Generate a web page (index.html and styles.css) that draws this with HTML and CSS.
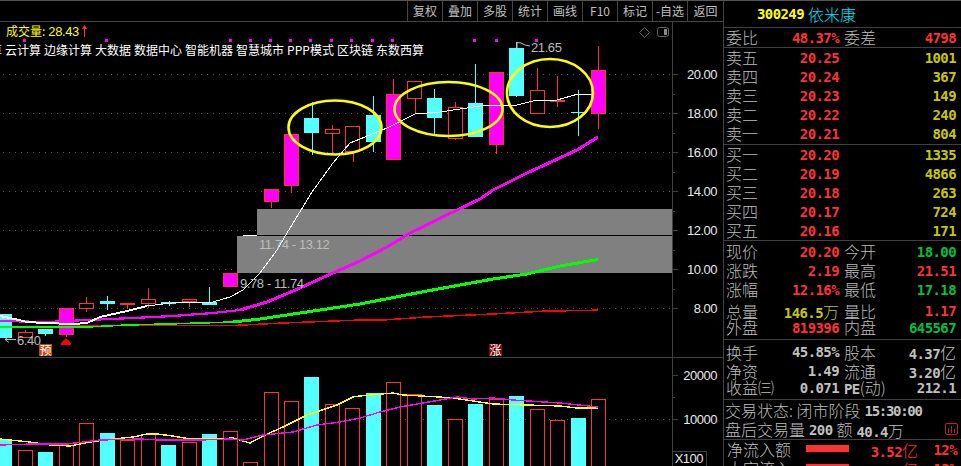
FILE: index.html
```html
<!DOCTYPE html>
<html>
  <head>
    <meta charset="UTF-8">
    <title>300249 依米康</title>
    <link rel="stylesheet" href="styles.css">
  </head>
  <body>
    <div class="app">
      <div class="main">
        <div class="toolbar">
          <a>复权</a><a>叠加</a><a>多股</a><a>统计</a><a>画线</a><a>F10</a><a>标记</a><a>-自选</a><a>返回</a>
        </div>
        <div class="chart">
          <svg class="plot" width="723" height="444" viewBox="0 22 723 444">
            <!-- grid -->
            <path class="grid" d="M3 74.5H672M3 113.5H672M3 152.5H672M3 191.5H672M3 230.5H672M3 269.5H672M3 308.5H672M3 419.5H672"/>
            <!-- gaps -->
            <rect class="gap" x="257" y="209" width="415" height="26"/>
            <rect class="gap" x="237" y="236" width="435" height="37"/>
            <path class="gap-line" d="M257 235.5H672"/>
            <path class="doji-white" d="M243 235.5H257"/>
            <!-- axis -->
            <path class="axis" d="M672.5 22V466M0 357.5H723M673 451.5H706.5V466"/>
            <path class="axis" d="M672 74.5H678M672 113.5H678M672 152.5H678M672 191.5H678M672 230.5H678M672 269.5H678M672 308.5H678M672 94.5H675M672 133.5H675M672 172.5H675M672 211.5H675M672 250.5H675M672 289.5H675M672 375.5H678M672 397.5H675M672 419.5H678"/>
            <text class="tick" x="717" y="79">20.00</text>
            <text class="tick" x="717" y="118">18.00</text>
            <text class="tick" x="717" y="157">16.00</text>
            <text class="tick" x="717" y="196">14.00</text>
            <text class="tick" x="717" y="235">12.00</text>
            <text class="tick" x="717" y="274">10.00</text>
            <text class="tick" x="717" y="313">8.00</text>
            <text class="tick" x="717" y="380">20000</text>
            <text class="tick" x="717" y="424">10000</text>
            <text class="tick" x="703" y="463">X100</text>

            <!-- candles -->
            <path class="wick-up" d="M25.5 330V332M86.5 297V303M86.5 309V312M127.5 305V309M148.5 288V299M148.5 304V308M189.5 302V307M66.5 335V337M271.5 202V208M291.5 186V193M332.5 125V129M332.5 134V153M353.5 152V162M393.5 79V94M415.5 99V113M455.5 102V107M455.5 139V140M496.5 145V154M537.5 68V90M557.5 76V100M557.5 102V107M598.5 46V70M598.5 114V129"/>
            <path class="wick-down" d="M45.5 334V336M107.5 296V310M169.5 301V306M209.5 287V302M312.5 102V155M373.5 96V152M434.5 89V135M475.5 64V137M516.5 42V97M578.5 90V136M571 112.5H586"/>
            <rect class="down" x="0" y="314" width="12" height="24"/>
            <rect class="up" x="18.5" y="332.5" width="14" height="5"/>
            <rect class="down" x="38" y="329" width="15" height="5"/>
            <rect class="limit" x="59.5" y="308.5" width="14" height="26"/>
            <rect class="up" x="79.5" y="303.5" width="14" height="5"/>
            <rect class="down" x="100" y="301" width="15" height="3"/>
            <rect class="flat" x="120" y="303" width="15" height="2"/>
            <rect class="up" x="141.5" y="299.5" width="14" height="4"/>
            <rect class="down" x="161" y="302" width="15" height="2"/>
            <rect class="up" x="182.5" y="299.5" width="14" height="2"/>
            <rect class="down" x="202" y="302" width="15" height="3"/>
            <rect class="limit" x="223.5" y="273.5" width="14" height="13"/>
            <rect class="limit" x="264.5" y="189.5" width="14" height="12"/>
            <rect class="limit" x="284.5" y="134.5" width="14" height="51"/>
            <rect class="down" x="304" y="118" width="15" height="15"/>
            <rect class="up" x="325.5" y="129.5" width="14" height="4"/>
            <rect class="up" x="345.5" y="126.5" width="14" height="25"/>
            <rect class="down" x="366" y="115" width="15" height="27"/>
            <rect class="limit" x="386.5" y="94.5" width="14" height="65"/>
            <rect class="up" x="407.5" y="81.5" width="14" height="17"/>
            <rect class="down" x="427" y="98" width="15" height="20"/>
            <rect class="up" x="448.5" y="107.5" width="14" height="31"/>
            <rect class="down" x="468" y="103" width="15" height="34"/>
            <rect class="limit" x="489.5" y="72.5" width="14" height="72"/>
            <rect class="down" x="509" y="48" width="15" height="48"/>
            <rect class="up" x="530.5" y="90.5" width="14" height="23"/>
            <rect class="flat" x="550" y="100" width="15" height="2"/>
            <rect class="limit" x="591.5" y="70.5" width="14" height="43"/>

            <!-- moving averages -->
            <polyline class="ma-red" points="0,327 117,325.5 233,325.5 283,323 360,320 383,320 427,317 493,314 547,311 587,310.5 598,310"/>
            <polyline class="ma-green thin" points="0,327 87,327 127,325 167,324 233,322"/>
            <polyline class="ma-green" points="233,322 260,319 300,313 360,304 427,291 493,279 527,274 560,266 598,259.5"/>
            <polyline class="ma-pink thin" points="0,321 47,322 87,320 133,318 173,316 213,313 240,310"/>
            <polyline class="ma-pink" points="240,310 267,302 300,288 333,273 360,261 387,247 410,233 457,210 480,199 493,190 527,173 577,150 598,137"/>
            <polyline class="ma-white wide" points="0,316 10,318 27,322 45,323 73,324 87,323 100,317 127,311 147,306"/>
            <polyline class="ma-white" points="147,306 180,302 213,302 230,297 243,290 260,273 277,250 287,233 312,192 333,163 350,143 360,139 387,128 415,114 440,112 480,106 490,105 513,106 537,100 557,100 578,94 593,94"/>

            <!-- marks -->
            <path class="flags" d="M22.500 38.500h3v3h-3zM104.500 38.500h3v3h-3zM228.500 38.500h3v3h-3zM248.500 38.500h3v3h-3zM268.500 38.500h3v3h-3zM288.500 38.500h3v3h-3zM308.500 38.500h3v3h-3zM329.500 38.500h3v3h-3zM349.500 38.500h3v3h-3zM370.500 38.500h3v3h-3zM390.500 38.500h3v3h-3zM472.500 38.500h3v3h-3zM494.500 38.500h3v3h-3zM534.500 38.500h3v3h-3z"/>
            <path class="arrow" d="M66 338L71 343V345H61V343Z"/>
            <ellipse class="ring" cx="335" cy="127.500" rx="46.500" ry="27"/>
            <ellipse class="ring" cx="448.500" cy="109" rx="54" ry="27"/>
            <ellipse class="ring" cx="550" cy="93" rx="43" ry="34"/>

            <!-- price notes -->
            <text class="note" x="259" y="249">11.74 - 13.12</text>
            <text class="note" x="240" y="288">9.78 - 11.74</text>
            <text class="note" x="17" y="345">6.40</text>
            <text class="note" x="531" y="52">21.65</text>
            <path class="leader" d="M16 339.500H5M9 336.500L5 339.500L9 342.500"/>
            <path class="leader" d="M517 48V42.500L521 43L525 45L530 46"/>

            <!-- volume -->
            <rect class="down" x="0" y="440" width="12" height="26"/>
            <rect class="up" x="18.500" y="450.500" width="14" height="16"/>
            <rect class="down" x="38" y="452" width="15" height="14"/>
            <rect class="up" x="59.500" y="445.500" width="14" height="21"/>
            <rect class="up" x="79.500" y="423.500" width="14" height="43"/>
            <rect class="down" x="100" y="433" width="15" height="33"/>
            <rect class="up" x="120.500" y="440.500" width="14" height="26"/>
            <rect class="up" x="141.500" y="434.500" width="14" height="32"/>
            <rect class="down" x="161" y="445" width="15" height="21"/>
            <rect class="up" x="182.500" y="442.500" width="14" height="24"/>
            <rect class="down" x="202" y="434" width="15" height="32"/>
            <rect class="up" x="223.500" y="431.500" width="14" height="35"/>
            <rect class="up" x="243.500" y="462.500" width="14" height="4"/>
            <rect class="up" x="264.500" y="392.500" width="14" height="74"/>
            <rect class="up" x="284.500" y="401.500" width="14" height="65"/>
            <rect class="down" x="304" y="377" width="15" height="89"/>
            <rect class="up" x="325.500" y="404.500" width="14" height="62"/>
            <rect class="up" x="345.500" y="408.500" width="14" height="58"/>
            <rect class="down" x="366" y="393" width="15" height="73"/>
            <rect class="up" x="386.500" y="382.500" width="14" height="84"/>
            <rect class="up" x="407.500" y="394.500" width="14" height="72"/>
            <rect class="down" x="427" y="405" width="15" height="61"/>
            <rect class="up" x="448.500" y="419.500" width="14" height="47"/>
            <rect class="down" x="468" y="404" width="15" height="62"/>
            <rect class="up" x="489.500" y="399.500" width="14" height="67"/>
            <rect class="down" x="509" y="396" width="15" height="70"/>
            <rect class="up" x="530.500" y="409.500" width="14" height="57"/>
            <rect class="up" x="550.500" y="420.500" width="14" height="46"/>
            <rect class="down" x="571" y="418" width="15" height="48"/>
            <rect class="up" x="591.500" y="399.500" width="14" height="67"/>
            <polyline class="vol-yellow" points="0,439 30,442 50,445 70,446 90,442 113,439 133,437 147,434 157,434 173,436 190,439 213,439 233,438 250,443 263,436 283,427 307,415 337,405 353,397 360,396 393,393 403,395 440,397 460,399 493,404 527,405 560,406 577,408 598,408"/>
            <polyline class="vol-pink" points="0,445 33,444 67,444 100,440 140,439 160,440 200,440 230,439 243,440 263,435 293,432 317,425 340,422 360,418 380,412 400,407 423,403 457,397 473,399 493,398 513,400 560,403 598,407"/>

            <!-- corner icons -->
            <path class="icon" d="M644.500 27.500L649.500 32.500L644.500 37.500L639.500 32.500Z"/>
            <rect class="icon" x="657.500" y="27.500" width="11" height="9" rx="2"/>
            <rect class="icon-fill" x="664" y="29" width="3" height="6"/>
          </svg>

          <div class="legend"><span class="legend-name">成交量:</span> <span class="legend-num">28.43</span><svg class="legend-up" width="5" height="12" viewBox="0 0 5 12"><path d="M2.500 0L5 4H3V12H2V4H0Z"/></svg></div>
          <div class="tags"><span>算</span><span>云计算</span><span>边缘计算</span><span>大数据</span><span>数据中心</span><span>智能机器</span><span>智慧城市</span><span>PPP模式</span><span>区块链</span><span>东数西算</span></div>
          <span class="badge badge-pre">预</span>
          <span class="badge badge-up">涨</span>
        </div>
      </div>

      <div class="panel">
        <div class="stock"><span class="stock-code">300249</span><span class="stock-name">依米康</span></div>

        <div class="section">
          <div class="row">
            <div class="half"><span>委比</span><b class="red">48.37%</b></div>
            <div class="half"><span>委差</span><b class="red">4798</b></div>
          </div>
        </div>

        <div class="section section-book">
          <div class="row"><div class="half"><span>卖五</span><b class="red">20.25</b></div><div class="half"><span></span><b class="olive">1001</b></div></div>
          <div class="row"><div class="half"><span>卖四</span><b class="red">20.24</b></div><div class="half"><span></span><b class="olive">367</b></div></div>
          <div class="row"><div class="half"><span>卖三</span><b class="red">20.23</b></div><div class="half"><span></span><b class="olive">149</b></div></div>
          <div class="row"><div class="half"><span>卖二</span><b class="red">20.22</b></div><div class="half"><span></span><b class="olive">240</b></div></div>
          <div class="row"><div class="half"><span>卖一</span><b class="red">20.21</b></div><div class="half"><span></span><b class="olive">804</b></div></div>
        </div>

        <div class="section">
          <div class="row"><div class="half"><span>买一</span><b class="red">20.20</b></div><div class="half"><span></span><b class="olive">1335</b></div></div>
          <div class="row"><div class="half"><span>买二</span><b class="red">20.19</b></div><div class="half"><span></span><b class="olive">4866</b></div></div>
          <div class="row"><div class="half"><span>买三</span><b class="red">20.18</b></div><div class="half"><span></span><b class="olive">263</b></div></div>
          <div class="row"><div class="half"><span>买四</span><b class="red">20.17</b></div><div class="half"><span></span><b class="olive">724</b></div></div>
          <div class="row"><div class="half"><span>买五</span><b class="red">20.16</b></div><div class="half"><span></span><b class="olive">171</b></div></div>
        </div>

        <div class="section section-stats">
          <div class="row"><div class="half"><span>现价</span><b class="red">20.20</b></div><div class="half"><span>今开</span><b class="green">18.00</b></div></div>
          <div class="row"><div class="half"><span>涨跌</span><b class="red">2.19</b></div><div class="half"><span>最高</span><b class="red">21.51</b></div></div>
          <div class="row"><div class="half"><span>涨幅</span><b class="red">12.16%</b></div><div class="half"><span>最低</span><b class="green">17.18</b></div></div>
          <div class="row"><div class="half"><span>总量</span><b class="olive">146.5<i>万</i></b></div><div class="half"><span>量比</span><b class="red">1.17</b></div></div>
          <div class="row"><div class="half"><span>外盘</span><b class="red">819396</b></div><div class="half"><span>内盘</span><b class="green">645567</b></div></div>
        </div>

        <div class="section section-shares">
          <div class="row"><div class="half"><span>换手</span><b>45.85%</b></div><div class="half"><span>股本</span><b>4.37<i>亿</i></b></div></div>
          <div class="row"><div class="half"><span>净资</span><b>1.49</b></div><div class="half"><span>流通</span><b>3.20<i>亿</i></b></div></div>
          <div class="row"><div class="half"><span>收益㈢</span><b>0.071</b></div><div class="half"><span><b>PE</b>(动)</span><b>212.1</b></div></div>
        </div>

        <div class="section section-trade">
          <div class="line"><span>交易状态: 闭市阶段</span><b class="clock">15:30:00</b></div>
          <div class="line"><span>盘后交易量</span><b>200</b><span>额</span><b>40.4<i>万</i></b>
            <svg class="trade-icon" width="13" height="12" viewBox="0 0 13 12"><rect x="0.500" y="0.500" width="12" height="11" rx="1.500"/><path d="M3.500 5V10M6.500 3V10M9.500 6V10"/></svg>
          </div>
        </div>

        <div class="flow">
          <div class="flow-row"><span class="flow-name">净流入额</span><span class="flow-bar"></span><b class="flow-num red">3.52<i>亿</i></b><b class="flow-pct red">12%</b></div>
          <div class="flow-row"><span class="flow-name">大宗流入</span><span class="flow-bar"></span><b class="flow-num red">3.78<i>亿</i></b><b class="flow-pct red">13%</b></div>
        </div>
      </div>
    </div>
  </body>
</html>
```

FILE: styles.css
```css
html,body {
  width:100%;
  height:100%;
  margin:0;
  background:#000;
  overflow:hidden;
  font-family:"Noto Sans CJK SC", sans-serif;
}

.app {
  display:flex;
  height:465px;
  border-top:1px #555 solid;
  overflow:hidden;
}

.main { width:723px; flex:none; display:flex; flex-direction:column; }

.toolbar {
  display:flex;
  justify-content:flex-end;
  height:20px;
  flex:none;
  border-bottom:1px #444 solid;
}
.toolbar a {
  width:35px;
  box-sizing:border-box;
  border-left:1px #444 solid;
  text-align:center;
  font-size:12px;
  line-height:20px;
  color:#c0c0c0;
}
.toolbar a:last-child { width:36px; }

.chart { position:relative; flex:1; overflow:hidden; }
.plot { display:block; }

.grid { stroke:#555; stroke-dasharray:1 5; fill:none; }
.gap { fill:#808080; }
.gap-line { stroke:#000; }
.doji-white { stroke:#fff; }
.axis { stroke:#404040; fill:none; }
.tick {
  fill:#e8e8e8;
  font:13px "Liberation Sans", sans-serif;
  letter-spacing:-0.5px;
  text-anchor:end;
}
.note {
  fill:#bdbdbd;
  font:13px "Liberation Sans", sans-serif;
  letter-spacing:-0.4px;
}
.leader { stroke:#bdbdbd; fill:none; }

.wick-up, .wick-down, .up, .down, .flat, .limit, .flags, .ma-red, .ma-green, .ma-pink, .ma-white, .vol-yellow, .vol-pink {
  shape-rendering:crispEdges;
}
.wick-up { stroke:#ff3232; fill:none; }
.wick-down { stroke:#54ffff; fill:none; }
.up { stroke:#ff3232; fill:#000; }
.down { fill:#54ffff; }
.flat { fill:#ff3232; }
.limit { stroke:#ff3232; fill:#f0f; }
.flags { fill:#f0f; }
.arrow { fill:#f00; }

.ma-red, .ma-green, .ma-pink, .ma-white, .vol-yellow, .vol-pink { fill:none; }
.ma-red { stroke:#f00; stroke-width:1.5; }
.ma-green { stroke:#0f0; stroke-width:3; }
.ma-pink { stroke:#f0f; stroke-width:3; }
.ma-white { stroke:#fff; stroke-width:1; }
.ma-green.thin { stroke-width:1.6; }
.ma-pink.thin { stroke-width:2.2; }
.ma-white.wide { stroke-width:2; }
.vol-yellow { stroke:#ff0; stroke-width:1.4; }
.vol-pink { stroke:#f0f; stroke-width:1.4; }

.ring { fill:none; stroke:#ff0; stroke-width:2.6; }
.icon { fill:none; stroke:#666; }
.icon-fill { fill:#888; }

.legend {
  position:absolute;
  left:6px;
  top:1px;
  display:flex;
  align-items:center;
  gap:3px;
  font-size:12px;
  line-height:16px;
  color:#ff0;
}
.legend-num { font:13px "Liberation Sans", sans-serif; letter-spacing:-0.4px; }
.legend-up { fill:#ff3232; }

.tags {
  position:absolute;
  left:-10px;
  top:20px;
  display:flex;
  gap:3px;
  font-size:12px;
  line-height:16px;
  color:#fff;
  white-space:nowrap;
}

.badge {
  position:absolute;
  top:322px;
  width:13px;
  height:12px;
  font-size:12px;
  line-height:12px;
  text-align:center;
  color:#fff;
}
.badge-pre { left:39px; background:#b8480f; }
.badge-up { left:489px; background:#7a0c0c; }

.panel {
  flex:1;
  border-left:1px #404040 solid;
  overflow:hidden;
  color:#bdbdbd;
  font-size:16px;
  font-weight:300;
  line-height:19px;
}

.stock {
  display:flex;
  align-items:center;
  gap:4px;
  height:26px;
  padding-left:33px;
  border-bottom:1px #404040 solid;
}
.stock-code {
  color:#ff0;
  font:bold 14px "DejaVu Sans Mono", monospace;
  letter-spacing:-0.6px;
}
.stock-name { color:#00e0ff; }

.section { border-bottom:1px #404040 solid; }
.section-book { padding-bottom:1px; }
.section-stats { padding:1px 0 2px; }
.section-shares { padding-bottom:2px; }
.section-trade { padding-top:1px; }

.row {
  display:grid;
  grid-template-columns:113px 112px;
  gap:5px;
  padding-left:2px;
  height:19px;
}
.half { display:flex; justify-content:space-between; align-items:center; white-space:nowrap; }

b {
  font:bold 14px "DejaVu Sans Mono", monospace;
  letter-spacing:-0.6px;
  color:#c0c0c0;
}
b i {
  font:300 16px "Noto Sans CJK SC", sans-serif;
  letter-spacing:0;
}
b.red { color:#ff3232; }
b.olive { color:#c8c800; }
b.green { color:#00c040; }
b.clock { letter-spacing:-1.3px; }

.line {
  position:relative;
  display:flex;
  align-items:center;
  gap:4px;
  height:19px;
  padding-left:1px;
  white-space:nowrap;
}
.trade-icon { position:absolute; left:221px; top:3px; fill:none; stroke:#c02020; }

.flow-row {
  display:flex;
  align-items:center;
  height:19px;
  padding-left:3px;
  white-space:nowrap;
}
.flow-name { width:79px; }
.flow-bar { width:43px; height:7px; margin-bottom:2px; background:#ff3232; }
.flow-num { width:69px; text-align:right; }
.flow-pct { width:39px; text-align:right; }
```
